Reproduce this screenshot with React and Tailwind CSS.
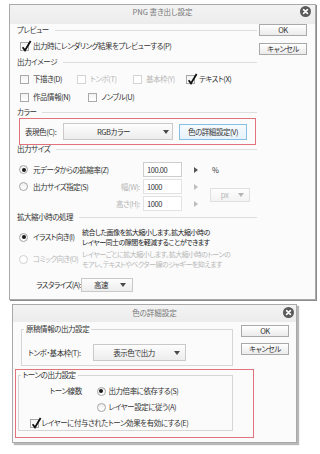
import React from "react";

const Check = ({ checked = false, disabled = false }) => (
  <span
    className={
      disabled
        ? "relative inline-block w-[9px] h-[9px] shrink-0 border border-[#d4d4d4] bg-white"
        : "relative inline-block w-[9px] h-[9px] shrink-0 border border-[#a9a9a9] bg-gradient-to-b from-[#f2f2f2] to-white"
    }
  >
    {checked && (
      <svg
        className="absolute left-[0px] top-[-3px] overflow-visible"
        width="11"
        height="12"
        viewBox="0 0 11 12"
      >
        <path d="M1.6 7.2 L4 10.4 L9.6 1" fill="none" stroke="#111" strokeWidth="1.8" />
      </svg>
    )}
  </span>
);

const Radio = ({ checked = false, disabled = false }) => (
  <span
    className={
      disabled
        ? "w-[9px] h-[9px] shrink-0 rounded-full border border-[#d0d0d0] bg-white flex items-center justify-center"
        : "w-[9px] h-[9px] shrink-0 rounded-full border border-[#a5a5a5] bg-gradient-to-b from-[#efefef] to-white flex items-center justify-center"
    }
  >
    {checked && <span className="w-[4px] h-[4px] rounded-full bg-[#1a1a1a]" />}
  </span>
);

const Tri = ({ color = "#4a4a4a" }) => (
  <svg width="6" height="4" viewBox="0 0 6 4" className="shrink-0">
    <path d="M0 0H6L3 4Z" fill={color} />
  </svg>
);

const Arrow = ({ color = "#666" }) => (
  <svg width="4" height="6" viewBox="0 0 4 6" className="shrink-0">
    <path d="M0 0L4 3L0 6Z" fill={color} />
  </svg>
);

const CloseBtn = () => (
  <svg width="11" height="11" viewBox="0 0 11 11">
    <circle cx="5.5" cy="5.5" r="5.5" fill="#5b5b5b" />
    <path d="M3.6 3.6L7.4 7.4M7.4 3.6L3.6 7.4" stroke="#fff" strokeWidth="1.6" strokeLinecap="round" />
  </svg>
);

const Heading = ({ children, className = "" }) => (
  <div className={"flex items-center gap-[6px] text-[#333] " + className}>
    <span className="whitespace-nowrap">{children}</span>
    <span className="flex-1 h-px bg-[#dedede]" />
  </div>
);

const Btn = ({ children, className = "" }) => (
  <div
    className={
      "h-[12px] flex items-center justify-center border border-[#a9a9a9] bg-gradient-to-b from-white to-[#ebebeb] text-[#333] " +
      className
    }
  >
    {children}
  </div>
);

const CheckItem = ({ w, checked, disabled, children }) => (
  <div className={"flex items-center gap-[4px] " + w}>
    <Check checked={checked} disabled={disabled} />
    <span className={disabled ? "text-[#b8b8b8] whitespace-nowrap" : "text-[#333] whitespace-nowrap"}>{children}</span>
  </div>
);

export default function App() {
  return (
    <div className="w-[320px] h-[454px] overflow-hidden bg-white flex flex-col font-['Noto_Sans_CJK_JP','Noto_Sans',sans-serif] text-[7.5px] leading-[10px] tracking-[-0.45px] text-[#333] [font-feature-settings:'palt']">
      {/* Dialog 1 */}
      <div className="ml-[9px] mt-[4px] w-[307px] h-[296px] shrink-0 border border-[#a9a9a9] shadow-[1px_1px_0_#8c8c8c] bg-[#fbfbfb] flex flex-col">
        <div className="relative h-[19px] shrink-0 bg-gradient-to-b from-[#f3f3f3] to-[#ececec] flex items-start justify-center pt-[1px] text-[#777]">
          <span className="leading-[12px] tracking-[0px]">PNG 書き出し設定</span>
          <div className="absolute right-[4px] top-[1px]">
            <CloseBtn />
          </div>
        </div>
        <div className="flex">
          {/* left column */}
          <div className="ml-[7px] w-[240px] flex flex-col">
            <Heading className="h-[12px]">プレビュー</Heading>
            <div className="h-[20px] flex items-center pl-[3px] gap-[4px]">
              <Check checked />
              <span>出力時にレンダリング結果をプレビューする(P)</span>
            </div>
            <Heading className="h-[12px]">出力イメージ</Heading>
            <div className="mt-[2px] h-[18px] flex items-center pl-[3px]">
              <CheckItem w="w-[57px]">下描き(D)</CheckItem>
              <CheckItem w="w-[56px]" disabled>トンボ(T)</CheckItem>
              <CheckItem w="w-[53px]" disabled>基本枠(Y)</CheckItem>
              <CheckItem w="w-[60px]" checked>テキスト(X)</CheckItem>
            </div>
            <div className="h-[18px] flex items-center pl-[3px]">
              <CheckItem w="w-[68px]">作品情報(N)</CheckItem>
              <CheckItem w="w-[60px]">ノンブル(U)</CheckItem>
            </div>
            <Heading className="h-[12px]">カラー</Heading>
            <div className="ml-[2px] w-[237px] h-[27px] border-[1.5px] border-[#e2737c] flex items-center pl-[5px]">
              <span className="w-[38px] whitespace-nowrap">表現色(C):</span>
              <div className="w-[110px] h-[17px] border border-[#c9c9c9] bg-gradient-to-b from-[#fdfdfd] to-[#ededed] flex items-center pr-[3px]">
                <span className="flex-1 text-center">RGBカラー</span>
                <Tri />
              </div>
              <div className="ml-[6px] w-[68px] h-[16px] border border-[#86bfe6] bg-gradient-to-b from-[#f6fbfe] to-[#e6f2fa] flex items-center justify-center whitespace-nowrap">
                色の詳細設定(V)
              </div>
            </div>
            <Heading className="h-[8px]">出力サイズ</Heading>
            <div className="mt-[8px] h-[17px] flex items-center">
              <div className="w-[126px] flex items-center pl-[2px] gap-[5px]">
                <Radio checked />
                <span className="whitespace-nowrap">元データからの拡縮率(Z)</span>
              </div>
              <div className="w-[39px] h-[15px] border border-[#cdcdcd] bg-white flex items-center pl-[3px]">100.00</div>
              <div className="ml-[12px]">
                <Arrow color="#555" />
              </div>
              <span className="ml-[14px]">%</span>
            </div>
            <div className="flex items-center">
              <div className="flex flex-col">
                <div className="h-[17px] flex items-center">
                  <div className="w-[126px] flex items-center pl-[2px] gap-[5px] pr-[3px]">
                    <Radio />
                    <span className="whitespace-nowrap">出力サイズ指定(S)</span>
                    <span className="flex-1" />
                    <span className="text-[#b5b5b5] whitespace-nowrap">幅(W):</span>
                  </div>
                  <div className="w-[39px] h-[15px] border border-[#e2e2e2] bg-white flex items-center pl-[3px]">1000</div>
                  <div className="ml-[12px]">
                    <Arrow color="#bdbdbd" />
                  </div>
                </div>
                <div className="h-[17px] flex items-center">
                  <div className="w-[126px] flex items-center justify-end pr-[3px]">
                    <span className="text-[#b5b5b5] whitespace-nowrap">高さ(H):</span>
                  </div>
                  <div className="w-[39px] h-[15px] border border-[#e2e2e2] bg-white flex items-center pl-[3px]">1000</div>
                  <div className="ml-[12px]">
                    <Arrow color="#bdbdbd" />
                  </div>
                </div>
              </div>
              <div className="ml-[12px] w-[40px] h-[14px] border border-[#e0e0e0] bg-gradient-to-b from-[#fdfdfd] to-[#f3f3f3] flex items-center pr-[5px] text-[#b5b5b5]">
                <span className="flex-1 text-center">px</span>
                <Tri color="#b5b5b5" />
              </div>
            </div>
            <Heading className="h-[10px]">拡大縮小時の処理</Heading>
            <div className="mt-[5px] h-[20px] flex items-center">
              <div className="w-[65px] flex items-center pl-[2px] gap-[5px]">
                <Radio checked />
                <span className="whitespace-nowrap tracking-[-0.6px]">イラスト向き(I)</span>
              </div>
              <div className="text-[7px] tracking-[-0.5px] leading-[10px] whitespace-nowrap text-[#222]">
                統合した画像を拡大縮小します。拡大縮小時の
                <br />
                レイヤー同士の隙間を軽減することができます
              </div>
            </div>
            <div className="mt-[2px] h-[20px] flex items-center text-[#b8b8b8]">
              <div className="w-[65px] flex items-center pl-[2px] gap-[5px]">
                <Radio disabled />
                <span className="whitespace-nowrap tracking-[-0.6px]">コミック向き(O)</span>
              </div>
              <div className="text-[7px] tracking-[-0.5px] leading-[10px] whitespace-nowrap">
                レイヤーごとに拡大縮小します。拡大縮小時のトーンの
                <br />
                モアレ、テキストやベクター線のジャギーを抑えます
              </div>
            </div>
            <div className="mt-[9px] h-[14px] flex items-center pl-[19px]">
              <span className="w-[45px] whitespace-nowrap tracking-[-0.6px]">ラスタライズ(A):</span>
              <div className="w-[52px] h-[14px] border border-[#c9c9c9] bg-gradient-to-b from-[#fdfdfd] to-[#ededed] flex items-center pr-[6px]">
                <span className="flex-1 text-center">高速</span>
                <Tri />
              </div>
            </div>
          </div>
          {/* right column */}
          <div className="ml-[2px] w-[48px] flex flex-col">
            <Btn>OK</Btn>
            <Btn className="mt-[7px]">キャンセル</Btn>
          </div>
        </div>
      </div>

      {/* Dialog 2 */}
      <div className="ml-[12px] mt-[4px] w-[285px] h-[139px] shrink-0 border border-[#a9a9a9] shadow-[2px_2px_1px_rgba(0,0,0,0.28)] bg-[#fbfbfb] flex flex-col">
        <div className="relative h-[17px] shrink-0 bg-gradient-to-b from-[#f3f3f3] to-[#ececec] flex items-start justify-center pt-[2px] text-[#777]">
          <span className="leading-[12px] tracking-[0px]">色の詳細設定</span>
          <div className="absolute right-[2px] top-[2px]">
            <CloseBtn />
          </div>
        </div>
        <div className="flex flex-col pl-[2px]">
          <div className="flex">
            <fieldset className="ml-[6px] mt-[2px] w-[212px] h-[42px] border border-[#d6d6d6] pl-[2px]">
              <legend className="px-[2px] leading-[10px]">原稿情報の出力設定</legend>
              <div className="mt-[10px] h-[17px] flex items-center pl-[4px]">
                <span className="w-[65px] whitespace-nowrap">トンボ・基本枠(T):</span>
                <div className="w-[93px] h-[17px] border border-[#c9c9c9] bg-gradient-to-b from-[#fdfdfd] to-[#ededed] flex items-center pr-[5px]">
                  <span className="flex-1 text-center">表示色で出力</span>
                  <Tri />
                </div>
              </div>
            </fieldset>
            <div className="ml-[8px] mt-[3px] w-[48px] flex flex-col">
              <Btn>OK</Btn>
              <Btn className="mt-[6px]">キャンセル</Btn>
            </div>
          </div>
          <div className="mt-[3px] w-[239px] h-[69px] border-[1.5px] border-[#e2737c] pl-[1.5px]">
            <fieldset className="w-[215px] h-[61px] border border-[#d6d6d6] pl-[2px]">
              <legend className="px-[2px] leading-[10px]">トーンの出力設定</legend>
              <div className="mt-[4px] h-[14px] flex items-center pl-[29px]">
                <span className="w-[47px] whitespace-nowrap">トーン線数</span>
                <Radio checked />
                <span className="ml-[3px] whitespace-nowrap">出力倍率に依存する(S)</span>
              </div>
              <div className="mt-[2px] h-[14px] flex items-center pl-[76px]">
                <Radio />
                <span className="ml-[3px] whitespace-nowrap">レイヤー設定に従う(A)</span>
              </div>
              <div className="mt-[2px] h-[14px] flex items-center pl-[9px]">
                <Check checked />
                <span className="ml-[3px] whitespace-nowrap">レイヤーに付与されたトーン効果を有効にする(E)</span>
              </div>
            </fieldset>
          </div>
        </div>
      </div>
    </div>
  );
}
